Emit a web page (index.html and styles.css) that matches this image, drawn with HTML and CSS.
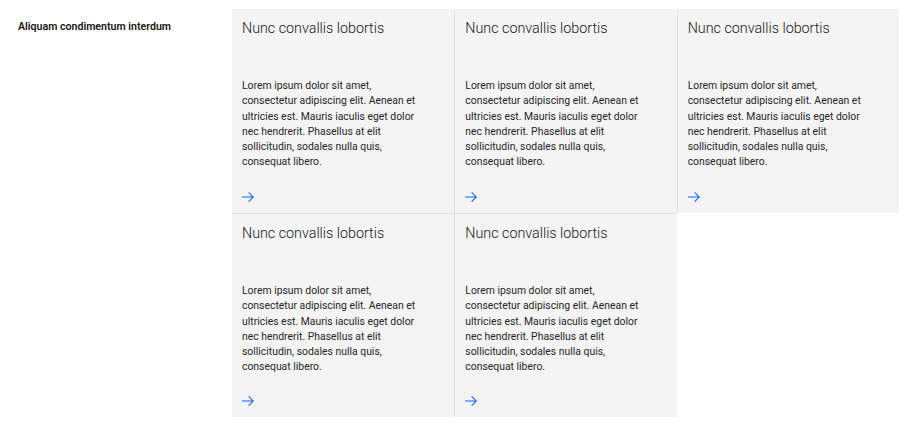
FILE: index.html
```html
<!DOCTYPE html>
<html lang="en">
<head>
<meta charset="utf-8">
<title>Card group</title>
<link rel="stylesheet" href="styles.css">
</head>
<body>
<div class="page">
  <aside class="side">
    <h2 class="side-title">Aliquam condimentum interdum</h2>
  </aside>
  <div class="cards">
    <a class="card" href="#">
      <h3 class="card-title">Nunc convallis lobortis</h3>
      <p class="card-text">Lorem ipsum dolor sit amet, consectetur adipiscing elit. Aenean et ultricies est. Mauris iaculis eget dolor nec hendrerit. Phasellus at elit sollicitudin, sodales nulla quis, consequat libero.</p>
      <svg class="card-arrow" viewBox="4 4 24 24" aria-hidden="true"><path d="M18 6l-1.43 1.393L24.15 15H4v2h20.15l-7.58 7.573L18 26l10-10L18 6z"/></svg>
    </a>
    <a class="card" href="#">
      <h3 class="card-title">Nunc convallis lobortis</h3>
      <p class="card-text">Lorem ipsum dolor sit amet, consectetur adipiscing elit. Aenean et ultricies est. Mauris iaculis eget dolor nec hendrerit. Phasellus at elit sollicitudin, sodales nulla quis, consequat libero.</p>
      <svg class="card-arrow" viewBox="4 4 24 24" aria-hidden="true"><path d="M18 6l-1.43 1.393L24.15 15H4v2h20.15l-7.58 7.573L18 26l10-10L18 6z"/></svg>
    </a>
    <a class="card" href="#">
      <h3 class="card-title">Nunc convallis lobortis</h3>
      <p class="card-text">Lorem ipsum dolor sit amet, consectetur adipiscing elit. Aenean et ultricies est. Mauris iaculis eget dolor nec hendrerit. Phasellus at elit sollicitudin, sodales nulla quis, consequat libero.</p>
      <svg class="card-arrow" viewBox="4 4 24 24" aria-hidden="true"><path d="M18 6l-1.43 1.393L24.15 15H4v2h20.15l-7.58 7.573L18 26l10-10L18 6z"/></svg>
    </a>
    <a class="card" href="#">
      <h3 class="card-title">Nunc convallis lobortis</h3>
      <p class="card-text">Lorem ipsum dolor sit amet, consectetur adipiscing elit. Aenean et ultricies est. Mauris iaculis eget dolor nec hendrerit. Phasellus at elit sollicitudin, sodales nulla quis, consequat libero.</p>
      <svg class="card-arrow" viewBox="4 4 24 24" aria-hidden="true"><path d="M18 6l-1.43 1.393L24.15 15H4v2h20.15l-7.58 7.573L18 26l10-10L18 6z"/></svg>
    </a>
    <a class="card" href="#">
      <h3 class="card-title">Nunc convallis lobortis</h3>
      <p class="card-text">Lorem ipsum dolor sit amet, consectetur adipiscing elit. Aenean et ultricies est. Mauris iaculis eget dolor nec hendrerit. Phasellus at elit sollicitudin, sodales nulla quis, consequat libero.</p>
      <svg class="card-arrow" viewBox="4 4 24 24" aria-hidden="true"><path d="M18 6l-1.43 1.393L24.15 15H4v2h20.15l-7.58 7.573L18 26l10-10L18 6z"/></svg>
    </a>
  </div>
</div>
</body>
</html>
```
FILE: styles.css
```css
* { box-sizing: border-box; }

body {
  margin: 0;
  background: #ffffff;
  color: #161616;
  font-family: Roboto, "Liberation Sans", Arial, sans-serif;
}

.page {
  display: flex;
  padding-top: 9px;
}

.side {
  width: 232px;
  flex: none;
  padding-left: 18px;
  padding-top: 10px;
}

.side-title {
  margin: 0;
  font-size: 10.6px;
  line-height: 15px;
  font-weight: 600;
  color: #161616;
}

.cards {
  width: 667px;
  display: grid;
  grid-template-columns: repeat(3, 1fr);
  grid-auto-rows: 204px;
}

.card {
  display: flex;
  flex-direction: column;
  background: #f4f4f4;
  padding: 10px;
  color: #161616;
  text-decoration: none;
}

.card:not(:nth-child(3n+1)) {
  border-left: 1px solid #e0e0e0;
}

.card:nth-child(n+4) {
  border-top: 1px solid #e0e0e0;
}

.card-title {
  margin: 0 0 41px 0;
  font-size: 14.3px;
  line-height: 18px;
  font-weight: 300;
}

.card-text {
  margin: 0;
  max-width: 180px;
  font-size: 10.4px;
  line-height: 15.3px;
  font-weight: 400;
  color: #262626;
}

.card-arrow {
  margin-top: auto;
  width: 12px;
  height: 12px;
  fill: #0f62fe;
  flex: none;
}
```
